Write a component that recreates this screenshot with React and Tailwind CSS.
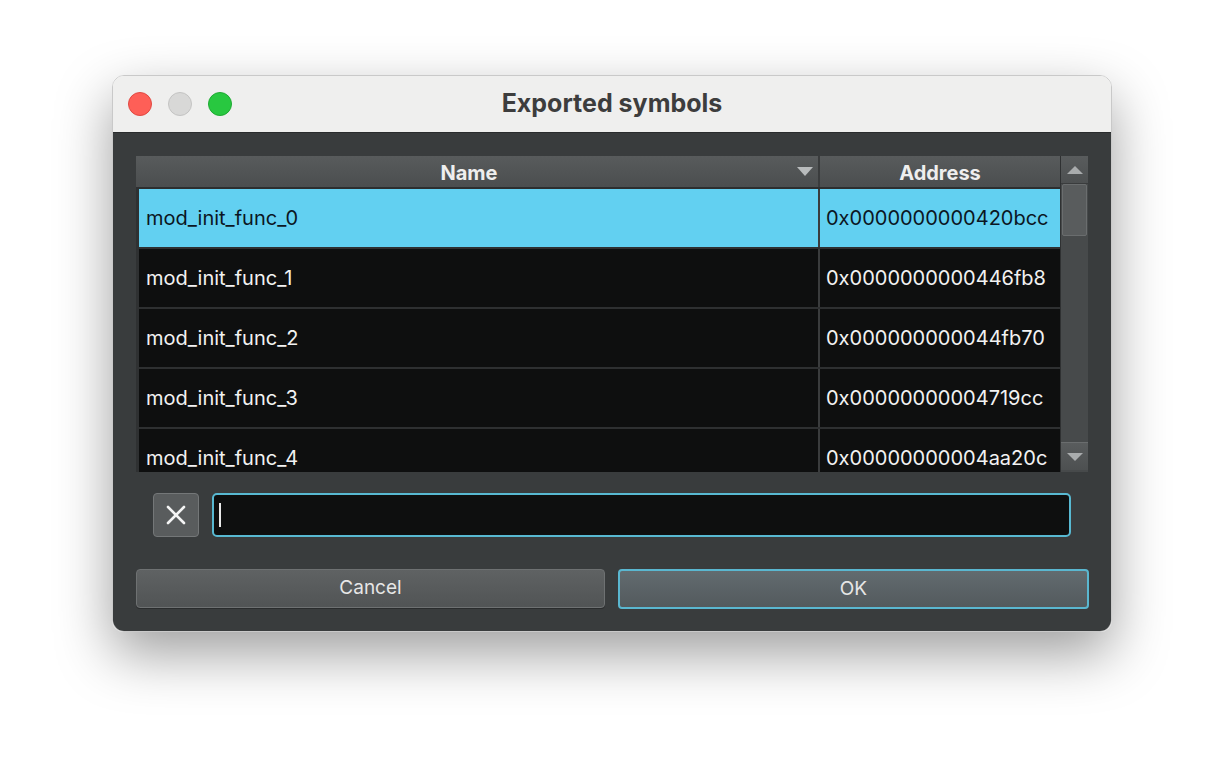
import React from "react";

const rows = [
  ["mod_init_func_0", "0x0000000000420bcc"],
  ["mod_init_func_1", "0x0000000000446fb8"],
  ["mod_init_func_2", "0x000000000044fb70"],
  ["mod_init_func_3", "0x00000000004719cc"],
  ["mod_init_func_4", "0x00000000004aa20c"],
];

const font = { fontFamily: "Inter, 'Liberation Sans', sans-serif" };

export default function App() {
  return (
    <div className="w-[1224px] h-[780px] bg-white overflow-hidden pt-[75px] pl-[112px]" style={font}>
      <div className="w-[1000px] h-[557px] rounded-[12px] overflow-hidden flex flex-col shadow-[0_22px_55px_rgba(0,0,0,0.38)] border border-[#c9c9c9]">
        {/* Title bar */}
        <div className="h-[57px] bg-[#efefee] flex items-center relative shrink-0 border-b border-[#2a2c2d]">
          <div className="flex items-center gap-[16px] pl-[15px]">
            <div className="w-[24px] h-[24px] rounded-full bg-[#fe5f57] border border-[#e14942]" />
            <div className="w-[24px] h-[24px] rounded-full bg-[#d8d8d7] border border-[#c4c4c3]" />
            <div className="w-[24px] h-[24px] rounded-full bg-[#28c840] border border-[#1eaa32]" />
          </div>
          <div className="absolute inset-0 flex items-center justify-center text-[25px] font-bold text-[#3d3d3d] pointer-events-none">
            Exported symbols
          </div>
        </div>
        {/* Body */}
        <div className="flex-1 bg-[#393c3d] pl-[23px] pr-[22px] pt-[23px] flex flex-col">
          {/* Table */}
          <div className="h-[316px] flex bg-[#0e0f0f] overflow-hidden mr-[1px]">
            <div className="flex-1 flex flex-col">
              {/* header */}
              <div className="h-[33px] flex shrink-0 bg-gradient-to-b from-[#585b5c] to-[#4b4e4f] border-b-[2px] border-[#2d2f30]">
                <div className="w-[684px] relative flex items-center justify-center pr-[16px] pt-[3px] text-[20px] font-bold text-[#eeeeee] border-r-[2px] border-[#3a3c3d]">
                  Name
                  <svg className="absolute right-[4px] top-[10px]" width="18" height="11" viewBox="0 0 18 11">
                    <polygon points="1,1 17,1 9,10" fill="#b9bcbd" />
                  </svg>
                </div>
                <div className="flex-1 flex items-center justify-center pt-[3px] text-[20px] font-bold text-[#eeeeee]">
                  Address
                </div>
              </div>
              {/* rows */}
              <div className="flex-1 overflow-hidden border-l-[3px] border-[#2f3132]">
                {rows.map(([n, a], i) => {
                  const sel = i === 0;
                  return (
                    <div
                      key={n}
                      className={
                        "h-[60px] shrink-0 flex text-[20px] border-b-[2px] border-[#2e3031] " +
                        (sel ? "bg-[#62d0f1] text-[#0b1623]" : "bg-[#0e0f0f] text-[#f2f2f2]")
                      }
                    >
                      <div className="w-[681px] flex items-center pl-[7px] border-r-[2px] border-[#3a3c3d]">{n}</div>
                      <div className="flex-1 flex items-center pl-[6px]">{a}</div>
                    </div>
                  );
                })}
              </div>
            </div>
            {/* scrollbar */}
            <div className="w-[28px] bg-[#474a4b] flex flex-col border-l border-[#2f3132]">
              <div className="h-[28px] flex items-center justify-center bg-gradient-to-b from-[#595c5d] to-[#4d5051] border-b border-[#3a3c3d]">
                <svg width="18" height="10" viewBox="0 0 18 10">
                  <polygon points="1,9 17,9 9,1" fill="#a9acad" />
                </svg>
              </div>
              <div className="h-[52px] mx-[1px] bg-[#595c5d] border border-[#6a6d6e] rounded-[2px]" />
              <div className="flex-1" />
              <div className="h-[28px] mb-[2px] flex items-center justify-center bg-gradient-to-b from-[#595c5d] to-[#4d5051] border-t border-[#6a6d6e]">
                <svg width="18" height="10" viewBox="0 0 18 10">
                  <polygon points="1,1 17,1 9,9" fill="#a9acad" />
                </svg>
              </div>
            </div>
          </div>
          {/* Search row */}
          <div className="flex items-center mt-[20px] pl-[17px] pr-[18px] gap-[13px] h-[45px]">
            <div className="w-[46px] h-[44px] rounded-[4px] bg-[#595c5d] border border-[#747778] flex items-center justify-center shrink-0">
              <svg width="22" height="22" viewBox="0 0 22 22">
                <path d="M3 3 L19 19 M19 3 L3 19" stroke="#f4f4f4" strokeWidth="2.6" strokeLinecap="round" />
              </svg>
            </div>
            <div className="flex-1 h-[44px] rounded-[5px] border-[2px] border-[#58b9d2] bg-[#0e0f0f] flex items-center pl-[5px]">
              <div className="w-[2px] h-[24px] bg-[#eaeaea]" />
            </div>
          </div>
          {/* Buttons */}
          <div className="flex gap-[13px] mt-[32px]">
            <div className="w-[469px] h-[39px] rounded-[4px] bg-gradient-to-b from-[#5f6263] to-[#515455] border border-[#6e7172] shadow-[0_1px_0_#2a2c2d] flex items-center justify-center text-[19px] text-[#e6e6e6]">
              Cancel
            </div>
            <div className="flex-1 h-[40px] rounded-[4px] bg-gradient-to-b from-[#626b6f] to-[#535a5d] border-[2px] border-[#5ab7d0] flex items-center justify-center text-[19px] text-[#e6e6e6]">
              OK
            </div>
          </div>
        </div>
      </div>
    </div>
  );
}
